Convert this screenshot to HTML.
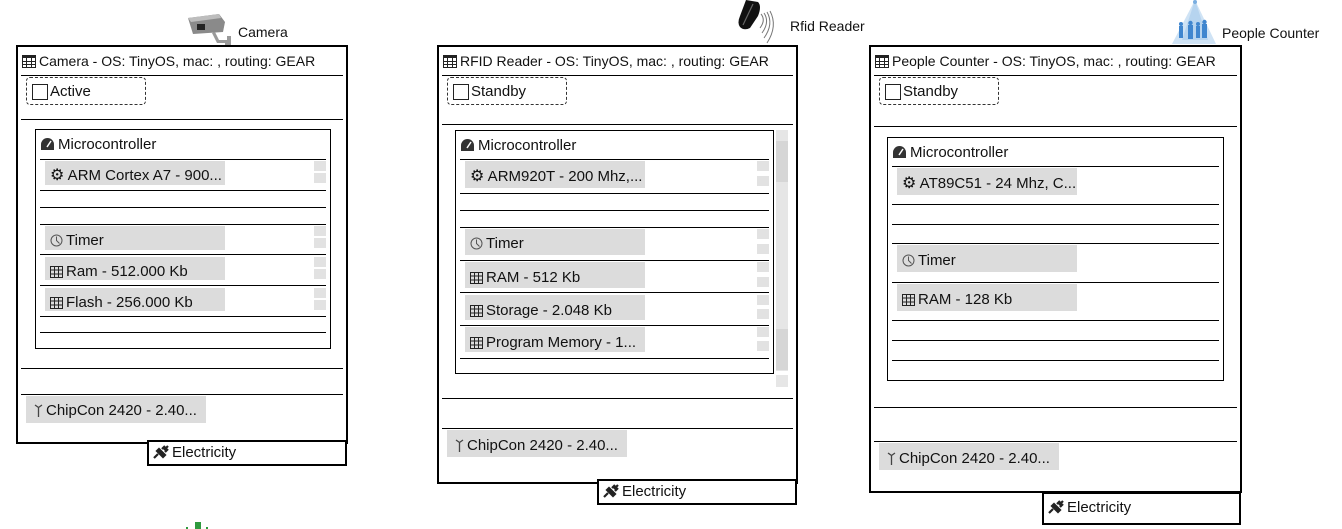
<!DOCTYPE html>
<html><head><meta charset="utf-8"><style>
*{margin:0;padding:0;box-sizing:border-box}
body{width:1342px;height:529px;background:#fff;position:relative;overflow:hidden;font-family:"Liberation Sans",sans-serif;font-size:14px;color:#111}
.a{position:absolute}
.box{position:absolute;border:2px solid #000;background:#fff}
.ib{position:absolute;border:1px solid #000}
.l{position:absolute;height:1px;background:#000}
.g{position:absolute;background:#dcdcdc;white-space:nowrap;line-height:32px;padding-left:5px;font-size:15px;overflow:hidden}
.p1 .g{line-height:30px}
.s{position:absolute;background:#e2e2e2;width:12px;height:10px}
.st{position:absolute;border:1px dashed #333;border-radius:4px;line-height:28px;padding-left:23px;font-size:15px}
.st:before{content:"";position:absolute;left:5px;top:6px;width:14px;height:14px;border:1px solid #222}
.t{position:absolute;white-space:nowrap;line-height:18px}
.m{font-size:15px}
.e{font-size:15px;padding-left:4px}
svg{vertical-align:-2px;margin-right:3px}
</style></head><body>

<!-- Camera icon -->
<svg class="a" style="left:185px;top:12px" width="50" height="34" viewBox="0 0 50 34"><path d="M3 6 L34 2 L40 10 L38 20 L8 22 Z" fill="#8a8a8a"/><path d="M3 6 L34 2 L36 6 L6 10Z" fill="#bdbdbd"/><rect x="12" y="12" width="8" height="6" fill="#222"/><path d="M30 20 L34 28 L42 28 L42 24 L46 24 L46 34 L40 34 L40 31 L32 31 L27 21Z" fill="#9a9a9a"/></svg>
<div class="t" style="left:238px;top:23px">Camera</div>

<!-- RFID icon -->
<svg class="a" style="left:736px;top:0px" width="50" height="45" viewBox="0 0 50 45"><path d="M10 0 L22 2 Q26 6 22 16 L14 28 Q8 31 4 27 Q1 23 4 16Z" fill="#111"/><path d="M7 25 L17 4" stroke="#666" stroke-width="1.2"/><g fill="none" stroke="#777" stroke-width="1"><path d="M25 14 Q30 20 24 28"/><path d="M28 13 Q34 22 26 33"/><path d="M31 12 Q38 24 28 38"/><path d="M34 11 Q42 26 31 43"/></g></svg>
<div class="t" style="left:790px;top:17px">Rfid Reader</div>

<!-- People counter icon -->
<svg class="a" style="left:1168px;top:0px" width="52" height="46" viewBox="0 0 52 46"><path d="M27 0 L4 44 L48 44Z" fill="#cfe3f5"/><path d="M27 0 L14 40 L40 40Z" fill="#b6d4ef"/><circle cx="27" cy="2" r="2" fill="#7aaee0"/><g fill="#3f86cf"><rect x="11" y="26" width="4" height="12"/><circle cx="13" cy="24" r="2"/><rect x="20" y="25" width="5" height="14"/><circle cx="22.5" cy="23" r="2.2"/><rect x="28" y="26" width="4" height="12"/><circle cx="30" cy="24" r="2"/><rect x="34" y="24" width="5" height="14"/><circle cx="36.5" cy="22" r="2.2"/></g></svg>
<div class="t" style="left:1222px;top:24px">People Counter</div>

<!-- ============ PANEL 1 ============ -->
<div class="p1">
<div class="box" style="left:16px;top:45px;width:332px;height:399px"></div>
<div class="t" style="left:22px;top:52px"><svg width="14" height="13" viewBox="0 0 14 13"><rect x=".5" y=".5" width="13" height="12" fill="none" stroke="#222"/><rect x="0" y="0" width="14" height="3" fill="#222"/><path d="M0 6.5h14M0 9.5h14M4.5 0v13M9.5 0v13" stroke="#222"/></svg>Camera - OS: TinyOS, mac: , routing: GEAR</div>
<div class="l" style="left:21px;top:75px;width:322px"></div>
<div class="st" style="left:26px;top:77px;width:120px;height:28px">Active</div>
<div class="l" style="left:21px;top:119px;width:322px"></div>
<div class="ib" style="left:35px;top:129px;width:296px;height:220px"></div>
<div class="t m" style="left:40px;top:136px"><svg width="15" height="14" viewBox="0 0 15 14"><path d="M7.5 1 A6.5 6.5 0 0 0 1 8 L1 13 L14 13 L14 8 A6.5 6.5 0 0 0 7.5 1Z" fill="#333"/><path d="M7 10 L11 4" stroke="#fff" stroke-width="1.5"/></svg>Microcontroller</div>
<div class="l" style="left:40px;top:159px;width:286px"></div>
<div class="g" style="left:45px;top:161px;width:180px;height:24px"><span style="font-size:16px">⚙</span> ARM Cortex A7 - 900...</div>
<div class="s" style="left:314px;top:161px"></div><div class="s" style="left:314px;top:173px"></div>
<div class="l" style="left:40px;top:190px;width:286px"></div>
<div class="l" style="left:40px;top:207px;width:286px"></div>
<div class="l" style="left:40px;top:224px;width:286px"></div>
<div class="g" style="left:45px;top:226px;width:180px;height:24px"><svg width="13" height="13" viewBox="0 0 13 13"><circle cx="6.5" cy="6.5" r="5.5" fill="none" stroke="#555"/><path d="M6.5 2.5v4l3 3" stroke="#555" fill="none"/></svg>Timer</div>
<div class="s" style="left:314px;top:226px"></div><div class="s" style="left:314px;top:238px"></div>
<div class="l" style="left:40px;top:254px;width:286px"></div>
<div class="g" style="left:45px;top:257px;width:180px;height:23px"><svg width="13" height="12" viewBox="0 0 13 12"><rect x=".5" y=".5" width="12" height="11" fill="none" stroke="#222"/><path d="M0 4h13M0 8h13M4.5 0v12M8.5 0v12" stroke="#222"/></svg>Ram - 512.000 Kb</div>
<div class="s" style="left:314px;top:257px"></div><div class="s" style="left:314px;top:269px"></div>
<div class="l" style="left:40px;top:285px;width:286px"></div>
<div class="g" style="left:45px;top:288px;width:180px;height:23px"><svg width="13" height="12" viewBox="0 0 13 12"><rect x=".5" y=".5" width="12" height="11" fill="none" stroke="#222"/><path d="M0 4h13M0 8h13M4.5 0v12M8.5 0v12" stroke="#222"/></svg>Flash - 256.000 Kb</div>
<div class="s" style="left:314px;top:288px"></div><div class="s" style="left:314px;top:300px"></div>
<div class="l" style="left:40px;top:316px;width:286px"></div>
<div class="l" style="left:40px;top:332px;width:286px"></div>
<div class="l" style="left:21px;top:368px;width:322px"></div>
<div class="l" style="left:21px;top:394px;width:322px"></div>
<div class="g" style="left:26px;top:396px;width:180px;height:27px;padding-left:8px"><svg width="9" height="13" viewBox="0 0 9 13"><path d="M4.5 3v10M1 1l3.5 2.5L8 1" stroke="#444" fill="none" stroke-width="1.3"/></svg>ChipCon 2420 - 2.40...</div>
</div>
<div class="box e" style="left:147px;top:440px;width:200px;height:26px;line-height:22px"><svg width="16" height="14" viewBox="0 0 16 14"><path d="M1 13 L5 9 M11 5 L15 1 M4 6 L10 12 L12 10 L6 4Z M9 4 L12 1 M12 7 L15 4" stroke="#222" stroke-width="2.2" fill="#222"/></svg>Electricity</div>

<!-- ============ PANEL 2 ============ -->
<div class="box" style="left:437px;top:45px;width:361px;height:439px"></div>
<div class="t" style="left:443px;top:52px"><svg width="14" height="13" viewBox="0 0 14 13"><rect x=".5" y=".5" width="13" height="12" fill="none" stroke="#222"/><rect x="0" y="0" width="14" height="3" fill="#222"/><path d="M0 6.5h14M0 9.5h14M4.5 0v13M9.5 0v13" stroke="#222"/></svg>RFID Reader - OS: TinyOS, mac: , routing: GEAR</div>
<div class="l" style="left:442px;top:75px;width:351px"></div>
<div class="st" style="left:447px;top:77px;width:120px;height:28px">Standby</div>
<div class="l" style="left:442px;top:124px;width:351px"></div>
<div class="a" style="left:776px;top:130px;width:12px;height:241px;background:#e6e6e6"></div>
<div class="a" style="left:776px;top:141px;width:12px;height:41px;background:#d6d6d6"></div>
<div class="a" style="left:776px;top:329px;width:12px;height:41px;background:#d6d6d6"></div>
<div class="a" style="left:776px;top:375px;width:12px;height:12px;background:#e6e6e6"></div>
<div class="ib" style="left:455px;top:130px;width:319px;height:244px"></div>
<div class="t m" style="left:460px;top:137px"><svg width="15" height="14" viewBox="0 0 15 14"><path d="M7.5 1 A6.5 6.5 0 0 0 1 8 L1 13 L14 13 L14 8 A6.5 6.5 0 0 0 7.5 1Z" fill="#333"/><path d="M7 10 L11 4" stroke="#fff" stroke-width="1.5"/></svg>Microcontroller</div>
<div class="l" style="left:460px;top:159px;width:309px"></div>
<div class="g" style="left:465px;top:161px;width:180px;height:27px"><span style="font-size:16px">⚙</span> ARM920T - 200 Mhz,...</div>
<div class="s" style="left:757px;top:161px"></div><div class="s" style="left:757px;top:176px"></div>
<div class="l" style="left:460px;top:193px;width:309px"></div>
<div class="l" style="left:460px;top:210px;width:309px"></div>
<div class="l" style="left:460px;top:227px;width:309px"></div>
<div class="g" style="left:465px;top:229px;width:180px;height:26px;line-height:30px"><svg width="13" height="13" viewBox="0 0 13 13"><circle cx="6.5" cy="6.5" r="5.5" fill="none" stroke="#555"/><path d="M6.5 2.5v4l3 3" stroke="#555" fill="none"/></svg>Timer</div>
<div class="s" style="left:757px;top:229px"></div><div class="s" style="left:757px;top:244px"></div>
<div class="l" style="left:460px;top:260px;width:309px"></div>
<div class="g" style="left:465px;top:262px;width:180px;height:26px"><svg width="13" height="12" viewBox="0 0 13 12"><rect x=".5" y=".5" width="12" height="11" fill="none" stroke="#222"/><path d="M0 4h13M0 8h13M4.5 0v12M8.5 0v12" stroke="#222"/></svg>RAM - 512 Kb</div>
<div class="s" style="left:757px;top:262px"></div><div class="s" style="left:757px;top:277px"></div>
<div class="l" style="left:460px;top:292px;width:309px"></div>
<div class="g" style="left:465px;top:295px;width:180px;height:25px"><svg width="13" height="12" viewBox="0 0 13 12"><rect x=".5" y=".5" width="12" height="11" fill="none" stroke="#222"/><path d="M0 4h13M0 8h13M4.5 0v12M8.5 0v12" stroke="#222"/></svg>Storage - 2.048 Kb</div>
<div class="s" style="left:757px;top:295px"></div><div class="s" style="left:757px;top:309px"></div>
<div class="l" style="left:460px;top:325px;width:309px"></div>
<div class="g" style="left:465px;top:327px;width:180px;height:25px"><svg width="13" height="12" viewBox="0 0 13 12"><rect x=".5" y=".5" width="12" height="11" fill="none" stroke="#222"/><path d="M0 4h13M0 8h13M4.5 0v12M8.5 0v12" stroke="#222"/></svg>Program Memory - 1...</div>
<div class="s" style="left:757px;top:327px"></div><div class="s" style="left:757px;top:341px"></div>
<div class="l" style="left:460px;top:358px;width:309px"></div>
<div class="l" style="left:442px;top:398px;width:351px"></div>
<div class="l" style="left:442px;top:428px;width:351px"></div>
<div class="g" style="left:447px;top:430px;width:180px;height:27px;padding-left:8px"><svg width="9" height="13" viewBox="0 0 9 13"><path d="M4.5 3v10M1 1l3.5 2.5L8 1" stroke="#444" fill="none" stroke-width="1.3"/></svg>ChipCon 2420 - 2.40...</div>
<div class="box e" style="left:597px;top:479px;width:200px;height:26px;line-height:22px"><svg width="16" height="14" viewBox="0 0 16 14"><path d="M1 13 L5 9 M11 5 L15 1 M4 6 L10 12 L12 10 L6 4Z M9 4 L12 1 M12 7 L15 4" stroke="#222" stroke-width="2.2" fill="#222"/></svg>Electricity</div>

<!-- ============ PANEL 3 ============ -->
<div class="box" style="left:869px;top:45px;width:373px;height:448px"></div>
<div class="t" style="left:875px;top:52px"><svg width="14" height="13" viewBox="0 0 14 13"><rect x=".5" y=".5" width="13" height="12" fill="none" stroke="#222"/><rect x="0" y="0" width="14" height="3" fill="#222"/><path d="M0 6.5h14M0 9.5h14M4.5 0v13M9.5 0v13" stroke="#222"/></svg>People Counter - OS: TinyOS, mac: , routing: GEAR</div>
<div class="l" style="left:874px;top:75px;width:363px"></div>
<div class="st" style="left:879px;top:77px;width:120px;height:28px">Standby</div>
<div class="l" style="left:874px;top:126px;width:363px"></div>
<div class="ib" style="left:887px;top:137px;width:337px;height:244px"></div>
<div class="t m" style="left:892px;top:144px"><svg width="15" height="14" viewBox="0 0 15 14"><path d="M7.5 1 A6.5 6.5 0 0 0 1 8 L1 13 L14 13 L14 8 A6.5 6.5 0 0 0 7.5 1Z" fill="#333"/><path d="M7 10 L11 4" stroke="#fff" stroke-width="1.5"/></svg>Microcontroller</div>
<div class="l" style="left:892px;top:166px;width:327px"></div>
<div class="g" style="left:897px;top:168px;width:180px;height:27px"><span style="font-size:16px">⚙</span> AT89C51 - 24 Mhz, C...</div>
<div class="l" style="left:892px;top:204px;width:327px"></div>
<div class="l" style="left:892px;top:224px;width:327px"></div>
<div class="l" style="left:892px;top:243px;width:327px"></div>
<div class="g" style="left:897px;top:245px;width:180px;height:27px"><svg width="13" height="13" viewBox="0 0 13 13"><circle cx="6.5" cy="6.5" r="5.5" fill="none" stroke="#555"/><path d="M6.5 2.5v4l3 3" stroke="#555" fill="none"/></svg>Timer</div>
<div class="l" style="left:892px;top:282px;width:327px"></div>
<div class="g" style="left:897px;top:284px;width:180px;height:27px"><svg width="13" height="12" viewBox="0 0 13 12"><rect x=".5" y=".5" width="12" height="11" fill="none" stroke="#222"/><path d="M0 4h13M0 8h13M4.5 0v12M8.5 0v12" stroke="#222"/></svg>RAM - 128 Kb</div>
<div class="l" style="left:892px;top:320px;width:327px"></div>
<div class="l" style="left:892px;top:340px;width:327px"></div>
<div class="l" style="left:892px;top:360px;width:327px"></div>
<div class="l" style="left:874px;top:407px;width:363px"></div>
<div class="l" style="left:874px;top:441px;width:363px"></div>
<div class="g" style="left:879px;top:443px;width:180px;height:27px;padding-left:8px"><svg width="9" height="13" viewBox="0 0 9 13"><path d="M4.5 3v10M1 1l3.5 2.5L8 1" stroke="#444" fill="none" stroke-width="1.3"/></svg>ChipCon 2420 - 2.40...</div>
<div class="box e" style="left:1042px;top:492px;width:199px;height:33px;line-height:28px"><svg width="16" height="14" viewBox="0 0 16 14"><path d="M1 13 L5 9 M11 5 L15 1 M4 6 L10 12 L12 10 L6 4Z M9 4 L12 1 M12 7 L15 4" stroke="#222" stroke-width="2.2" fill="#222"/></svg>Electricity</div>

<!-- green marker bottom -->
<div class="a" style="left:195px;top:522px;width:6px;height:7px;background:#2e9a3e"></div>
<div class="a" style="left:186px;top:527px;width:2px;height:2px;background:#2e9a3e"></div>
<div class="a" style="left:206px;top:527px;width:2px;height:2px;background:#2e9a3e"></div>
</body></html>
